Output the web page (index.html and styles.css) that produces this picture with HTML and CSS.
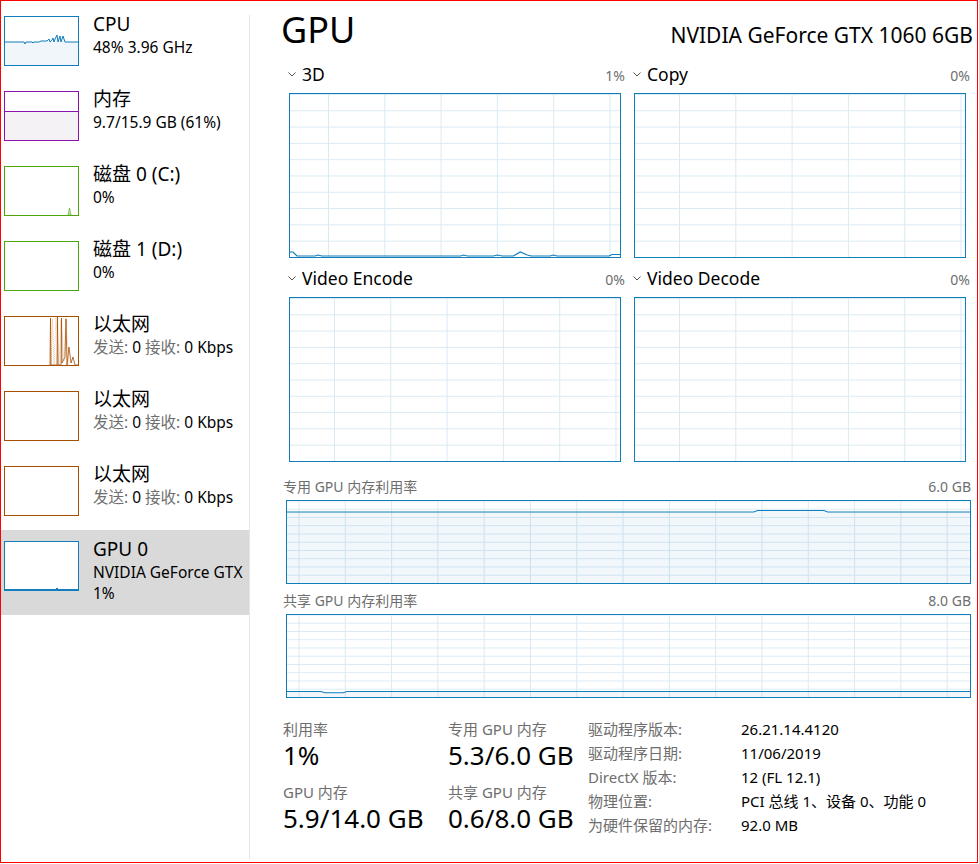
FILE: index.html
```html
<!DOCTYPE html>
<html lang="zh-CN">
<head>
  <meta charset="UTF-8">
  <meta name="viewport" content="width=device-width, initial-scale=1.0">
  <title>任务管理器 - GPU</title>
  <link rel="stylesheet" href="styles.css">
</head>
<body>
  <div class="window">
    <aside class="sidebar">
      <div class="item">
        <div class="thumb thumb--cpu">
          <svg viewBox="0 0 73 48" width="73" height="48">
            <path d="M0 25 L19 25 L20 27 L21 25 L27 25 L28 26 L29 25 L34 25 L36 24 L42 24 L44 22 L45 25 L47 23 L48 21 L49 25 L50 22 L52 18 L53 25 L55 19 L56 25 L58 19 L60 25 L73 25 L73 48 L0 48 Z" fill="#f1f6fa"/>
            <polyline points="0,25 19,25 20,27 21,25 27,25 28,26 29,25 34,25 36,24 42,24 44,22 45,25 47,23 48,21 49,25 50,22 52,18 53,25 55,19 56,25 58,19 60,25 73,25" fill="none" stroke="#117dbb" stroke-width="1"/>
          </svg>
        </div>
        <div class="item__text">
          <div class="item__title">CPU</div>
          <div class="item__sub">48% 3.96 GHz</div>
        </div>
      </div>
      <div class="item">
        <div class="thumb thumb--mem">
          <svg viewBox="0 0 73 48" width="73" height="48">
            <rect x="0" y="19.5" width="73" height="29" fill="#f4f2f4"/>
            <line x1="0" y1="19.5" x2="73" y2="19.5" stroke="#8b12ae" stroke-width="1"/>
          </svg>
        </div>
        <div class="item__text">
          <div class="item__title">内存</div>
          <div class="item__sub">9.7/15.9 GB (61%)</div>
        </div>
      </div>
      <div class="item">
        <div class="thumb thumb--disk">
          <svg viewBox="0 0 73 48" width="73" height="48">
            <polygon points="63,48 64.5,41 66,48" fill="#c9e5b3" stroke="#4da60c" stroke-width="0.6"/>
          </svg>
        </div>
        <div class="item__text">
          <div class="item__title">磁盘 0 (C:)</div>
          <div class="item__sub">0%</div>
        </div>
      </div>
      <div class="item">
        <div class="thumb thumb--disk"></div>
        <div class="item__text">
          <div class="item__title">磁盘 1 (D:)</div>
          <div class="item__sub">0%</div>
        </div>
      </div>
      <div class="item">
        <div class="thumb thumb--net">
          <svg viewBox="0 0 73 48" width="73" height="48">
            <polyline points="46,48 47.5,2 49,48 51,0 54,48 56,3 59,44 61,0 64,48" fill="none" stroke="#e8c1a1" stroke-width="0.8" stroke-dasharray="1 1"/>
            <polyline points="45,48 45.5,1 46,48 52,48 52.5,0 53,48 56,48 56.5,1 57,46 60,40 61,2 62,48 64,30 66,46 68,40 70,48 73,48" fill="none" stroke="#a74f01" stroke-width="0.8"/>
          </svg>
        </div>
        <div class="item__text">
          <div class="item__title">以太网</div>
          <div class="item__sub"><span class="muted">发送:</span> 0 <span class="muted">接收:</span> 0 Kbps</div>
        </div>
      </div>
      <div class="item">
        <div class="thumb thumb--net"></div>
        <div class="item__text">
          <div class="item__title">以太网</div>
          <div class="item__sub"><span class="muted">发送:</span> 0 <span class="muted">接收:</span> 0 Kbps</div>
        </div>
      </div>
      <div class="item">
        <div class="thumb thumb--net"></div>
        <div class="item__text">
          <div class="item__title">以太网</div>
          <div class="item__sub"><span class="muted">发送:</span> 0 <span class="muted">接收:</span> 0 Kbps</div>
        </div>
      </div>
      <div class="item item--active">
        <div class="thumb thumb--gpu">
          <svg viewBox="0 0 73 48" width="73" height="48">
            <line x1="0" y1="47.5" x2="73" y2="47.5" stroke="#117dbb" stroke-width="1"/>
            <rect x="51" y="46" width="2" height="2" fill="#117dbb"/>
          </svg>
        </div>
        <div class="item__text">
          <div class="item__title">GPU 0</div>
          <div class="item__sub">NVIDIA GeForce GTX</div>
          <div class="item__sub">1%</div>
        </div>
      </div>
    </aside>

    <div class="divider"></div>

    <main class="main">
      <div class="header">
        <h1 class="header__title">GPU</h1>
        <div class="header__model">NVIDIA GeForce GTX 1060 6GB</div>
      </div>

      <div class="engines">
        <div class="engine">
          <div class="engine__head">
            <span class="engine__name"><svg class="chevron" viewBox="0 0 8 5" width="8" height="5"><polyline points="0.5,0.5 4,4 7.5,0.5" fill="none" stroke="#555" stroke-width="1"/></svg>3D</span>
            <span class="engine__pct">1%</span>
          </div>
          <div class="chart chart--engine chart--3d">
            <svg viewBox="0 0 331 163" preserveAspectRatio="none">
              <path d="M0 158 L3 158 L7 162 L25 162 L28 161 L32 162 L171 162 L174 161 L178 162 L204 162 L208 161 L213 162 L224 162 L231 158 L238 161 L242 162 L261 162 L264 161 L268 162 L320 162 L323 160.5 L331 160.5" fill="none" stroke="#117dbb" stroke-width="1.2"/>
            </svg>
          </div>
        </div>
        <div class="engine">
          <div class="engine__head">
            <span class="engine__name"><svg class="chevron" viewBox="0 0 8 5" width="8" height="5"><polyline points="0.5,0.5 4,4 7.5,0.5" fill="none" stroke="#555" stroke-width="1"/></svg>Copy</span>
            <span class="engine__pct">0%</span>
          </div>
          <div class="chart chart--engine"></div>
        </div>
        <div class="engine">
          <div class="engine__head">
            <span class="engine__name"><svg class="chevron" viewBox="0 0 8 5" width="8" height="5"><polyline points="0.5,0.5 4,4 7.5,0.5" fill="none" stroke="#555" stroke-width="1"/></svg>Video Encode</span>
            <span class="engine__pct">0%</span>
          </div>
          <div class="chart chart--engine"></div>
        </div>
        <div class="engine">
          <div class="engine__head">
            <span class="engine__name"><svg class="chevron" viewBox="0 0 8 5" width="8" height="5"><polyline points="0.5,0.5 4,4 7.5,0.5" fill="none" stroke="#555" stroke-width="1"/></svg>Video Decode</span>
            <span class="engine__pct">0%</span>
          </div>
          <div class="chart chart--engine"></div>
        </div>
      </div>

      <div class="mem">
        <div class="mem__head"><span>专用 GPU 内存利用率</span><span>6.0 GB</span></div>
        <div class="chart chart--mem">
          <svg viewBox="0 0 682 82" preserveAspectRatio="none">
            <path d="M0 11 L466 11 L470 9.5 L536 9.5 L540 11 L682 11 L682 82 L0 82 Z" fill="rgba(17,125,187,0.06)"/>
            <path d="M0 11 L466 11 L470 9.5 L536 9.5 L540 11 L682 11" fill="none" stroke="#117dbb" stroke-width="1"/>
          </svg>
        </div>
      </div>

      <div class="mem mem--shared">
        <div class="mem__head"><span>共享 GPU 内存利用率</span><span>8.0 GB</span></div>
        <div class="chart chart--mem">
          <svg viewBox="0 0 682 82" preserveAspectRatio="none">
            <path d="M0 76.5 L34 76.5 L38 77.8 L56 77.8 L60 76.5 L682 76.5 L682 82 L0 82 Z" fill="rgba(17,125,187,0.06)"/>
            <path d="M0 76.5 L34 76.5 L38 77.8 L56 77.8 L60 76.5 L682 76.5" fill="none" stroke="#117dbb" stroke-width="1"/>
          </svg>
        </div>
      </div>

      <div class="stats">
        <div class="stats__col stats__col--first">
          <div class="stat">
            <div class="stat__label">利用率</div>
            <div class="stat__value">1%</div>
          </div>
          <div class="stat">
            <div class="stat__label">GPU 内存</div>
            <div class="stat__value">5.9/14.0 GB</div>
          </div>
        </div>
        <div class="stats__col stats__col--second">
          <div class="stat">
            <div class="stat__label">专用 GPU 内存</div>
            <div class="stat__value">5.3/6.0 GB</div>
          </div>
          <div class="stat">
            <div class="stat__label">共享 GPU 内存</div>
            <div class="stat__value">0.6/8.0 GB</div>
          </div>
        </div>
        <div class="info">
          <span class="info__label">驱动程序版本:</span><span class="info__value">26.21.14.4120</span>
          <span class="info__label">驱动程序日期:</span><span class="info__value">11/06/2019</span>
          <span class="info__label">DirectX 版本:</span><span class="info__value">12 (FL 12.1)</span>
          <span class="info__label">物理位置:</span><span class="info__value">PCI 总线 1、设备 0、功能 0</span>
          <span class="info__label">为硬件保留的内存:</span><span class="info__value">92.0 MB</span>
        </div>
      </div>
    </main>
  </div>
</body>
</html>
```

FILE: styles.css
```css
* {
  box-sizing: border-box;
}

body {
  margin: 0;
  background-color: #fff;
  font-family: "Noto Sans", "Noto Sans CJK SC", sans-serif;
  color: #000;
}

.window {
  width: 978px;
  height: 863px;
  border: 1px solid #ff0000;
  display: flex;
  overflow: hidden;
}

/* left list */

.sidebar {
  width: 248px;
  flex-shrink: 0;
  padding-top: 4px;
}

.item {
  height: 75px;
  display: flex;
  padding: 11px 0 0 3px;
  overflow: hidden;
  white-space: nowrap;
}

.item--active {
  height: 85px;
  background-color: #d9d9d9;
}

.thumb {
  width: 75px;
  height: 50px;
  flex-shrink: 0;
  border: 1px solid #117dbb;
  background-color: #fff;
}

.thumb svg {
  display: block;
}

.thumb--mem {
  border-color: #8b12ae;
}

.thumb--disk {
  border-color: #4da60c;
}

.thumb--net {
  border-color: #a74f01;
}

.item__text {
  margin-left: 14px;
  margin-top: -5px;
}

.item__title {
  font-size: 19px;
  line-height: 26px;
  height: 26px;
}

.item__sub {
  font-size: 15.5px;
  line-height: 21px;
  height: 21px;
}

.muted {
  color: #6e6e6e;
}

.divider {
  width: 1px;
  flex-shrink: 0;
  margin: 14px 0 3px;
  background-color: #e6e6e6;
}

/* right panel */

.main {
  flex: 1;
  padding: 6px 6px 0 33px;
}

.header {
  display: flex;
  justify-content: space-between;
  align-items: baseline;
  height: 45px;
}

.header__title {
  margin: 0 0 0 -2px;
  font-size: 36px;
  font-weight: normal;
  line-height: 46px;
}

.header__model {
  font-size: 21px;
  margin-right: -2px;
}

.engines {
  display: grid;
  grid-template-columns: 337px 337px;
  column-gap: 8px;
  row-gap: 8px;
  margin-top: 10px;
  padding-left: 5px;
}

.engine__head {
  display: flex;
  justify-content: space-between;
  align-items: baseline;
  height: 24px;
  line-height: 24px;
  margin-bottom: 7px;
}

.engine__name {
  font-size: 17.5px;
}

.chevron {
  margin-right: 6px;
  vertical-align: 4px;
}

.engine__pct {
  font-size: 14px;
  color: #6e6e6e;
}

.chart {
  border: 1px solid #117dbb;
  background:
    linear-gradient(to right, #d9eaf4 1px, transparent 1px) 44px 0 / 56.3px 100%,
    linear-gradient(to bottom, #d9eaf4 1px, transparent 1px) 0 0 / 100% 16.3px,
    #fff;
}

.chart svg {
  display: block;
  width: 100%;
  height: 100%;
}

.chart--engine {
  height: 165px;
  margin: 0 4px 0 1px;
}

.chart--3d {
  background-position: 38px 0, 0 0, 0 0;
}

.mem {
  margin-top: 15px;
}

.mem--shared {
  margin-top: 7px;
}

.mem__head {
  display: flex;
  justify-content: space-between;
  font-size: 14px;
  line-height: 20px;
  height: 20px;
  color: #6e6e6e;
  margin-bottom: 3px;
}

.chart--mem {
  height: 84px;
  margin-left: 3px;
  background:
    linear-gradient(to right, #d9eaf4 1px, transparent 1px) 11.5px 0 / 46.3px 100%,
    linear-gradient(to bottom, #d9eaf4 1px, transparent 1px) 0 -0.5px / 100% 8.25px,
    #fff;
}

.stats {
  display: flex;
  margin-top: 21px;
}

.stats__col--first {
  width: 165px;
}

.stats__col--second {
  width: 140px;
}

.stat {
  height: 63px;
}

.stat__label {
  font-size: 15px;
  line-height: 20px;
  height: 20px;
  color: #6e6e6e;
}

.stat__value {
  font-size: 26px;
  line-height: 32px;
  height: 32px;
}

.info {
  display: grid;
  grid-template-columns: 153px auto;
  grid-auto-rows: 24px;
  font-size: 15px;
  line-height: 24px;
  margin-top: -2px;
}

.info__label {
  color: #6e6e6e;
}
```
